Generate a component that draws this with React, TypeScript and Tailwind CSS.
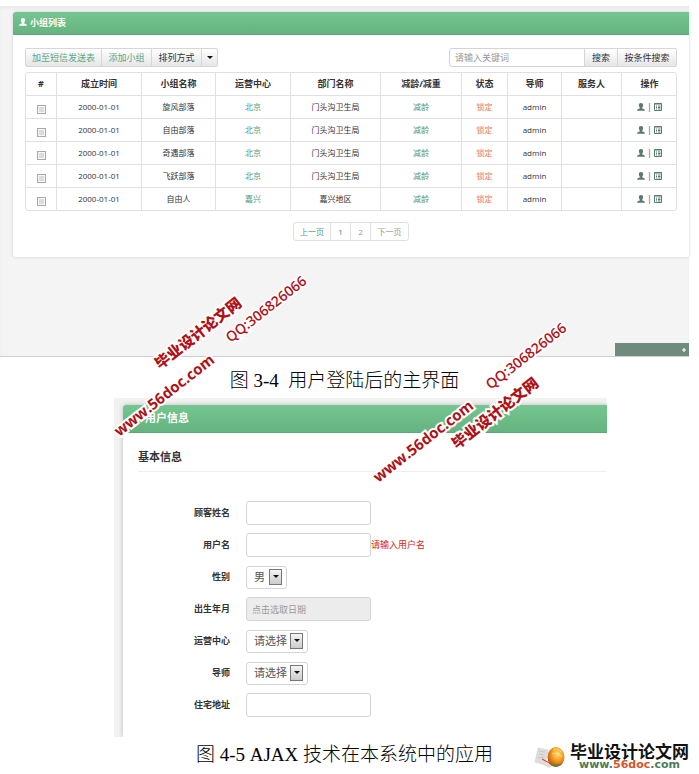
import type { ReactNode } from "react";
import clsx from "clsx";

const groups = [
  { date: "2000-01-01", name: "旋风部落", center: "北京", dept: "门头沟卫生局" },
  { date: "2000-01-01", name: "自由部落", center: "北京", dept: "门头沟卫生局" },
  { date: "2000-01-01", name: "奇遇部落", center: "北京", dept: "门头沟卫生局" },
  { date: "2000-01-01", name: "飞跃部落", center: "北京", dept: "门头沟卫生局" },
  { date: "2000-01-01", name: "自由人", center: "嘉兴", dept: "嘉兴地区" },
];

const columns = [
  { label: "#", width: "w-[30px]" },
  { label: "成立时间", width: "w-[85px]" },
  { label: "小组名称", width: "w-[74px]" },
  { label: "运营中心", width: "w-[75px]" },
  { label: "部门名称", width: "w-[90px]" },
  { label: "减龄/减重", width: "w-[81px]" },
  { label: "状态", width: "w-[46px]" },
  { label: "导师", width: "w-[54px]" },
  { label: "服务人", width: "w-[60px]" },
  { label: "操作", width: "w-[56px]" },
];

const sans = "font-['Open_Sans','Noto_Sans_CJK_SC',sans-serif]";
const buttonStyle =
  "flex items-center justify-center border border-[#d6d6d6] bg-linear-to-b from-white to-[#e6e6e6]";
const inputStyle =
  "h-6 w-[125px] rounded-[3px] border border-[#d4d4d4] px-[5px] text-[9px] placeholder:text-[#999]";

function UserIcon({ className }: { className?: string }) {
  return (
    <svg viewBox="0 0 14 14" className={className} fill="currentColor">
      <path d="M7 0C4.600 0 3.200 1.400 3.200 3.700c0 1.900.7 3.300 1.600 4.100v1.700C3 10 .3 10.500 0 13.500h14c-.3-3-3-3.500-4.800-4V7.800c.9-.8 1.600-2.200 1.600-4.100C10.800 1.400 9.400 0 7 0z" />
    </svg>
  );
}

function ListIcon() {
  return (
    <svg viewBox="0 0 8 8" className="size-2" fill="none" stroke="currentColor">
      <path d="M0.500 0.500h7v7h-7z" />
      <path d="M0.500 1h7" />
      <path d="M2 3h1M2 4.500h1M2 6h1M4 3h2.500M4 4.500h2.500M4 6h2.500" />
    </svg>
  );
}

function Caret() {
  return (
    <svg viewBox="0 0 6 3" className="h-[3px] w-[6px]">
      <path d="M0 0h6L3 3z" fill="#111" />
    </svg>
  );
}

function GroupTable() {
  return (
    <div className="mt-[5px] overflow-hidden rounded-[3px] border border-[#e0e0e0]">
      <table className="w-full table-fixed border-separate border-spacing-0 text-center text-[8px] leading-[10px] text-[#333]">
        <thead>
          <tr>
            {columns.map((col) => (
              <th
                key={col.label}
                scope="col"
                className={clsx(
                  "h-[22px] border-l border-[#e0e0e0] p-0 text-[9px] font-bold first:border-l-0",
                  col.width
                )}
              >
                {col.label}
              </th>
            ))}
          </tr>
        </thead>
        <tbody className="[&_td]:h-[23px] [&_td]:border-t [&_td]:border-l [&_td]:border-[#e0e0e0] [&_td]:p-0 [&_td:first-child]:border-l-0">
          {groups.map((group) => (
            <tr key={group.name}>
              <td>
                <input
                  type="checkbox"
                  aria-label={group.name}
                  className="mx-auto mt-1 block size-[9px] appearance-none border border-[#aaa] bg-[#dcdcdc] outline-1 -outline-offset-2 outline-[#f6f6f6] checked:bg-[#5aa37c]"
                />
              </td>
              <td>{group.date}</td>
              <td>{group.name}</td>
              <td>
                <a href="#" className="text-[#4f9a7b]">
                  {group.center}
                </a>
              </td>
              <td>{group.dept}</td>
              <td>
                <a href="#" className="text-[#4f9a7b]">
                  减龄
                </a>
              </td>
              <td className="text-[#ee7a45]">锁定</td>
              <td>admin</td>
              <td></td>
              <td>
                <div className="flex items-center justify-center gap-[2px] text-[#5b7b6e]">
                  <a href="#" aria-label="成员">
                    <UserIcon className="size-2" />
                  </a>
                  <span className="text-[9px] text-[#555]">|</span>
                  <a href="#" aria-label="详情">
                    <ListIcon />
                  </a>
                </div>
              </td>
            </tr>
          ))}
        </tbody>
      </table>
    </div>
  );
}

function Pagination() {
  return (
    <nav className="mx-auto mt-[11px] flex h-[19px] w-fit divide-x divide-[#e0e0e0] rounded-[3px] border border-[#e0e0e0] text-[8px] text-[#999] [&>a]:flex [&>a]:items-center [&>a]:justify-center">
      <a href="#" className="w-[37px] text-[#4f9a7b]">
        上一页
      </a>
      <a href="#" className="w-5 text-[#4f7a6b]">
        1
      </a>
      <a href="#" className="w-5">
        2
      </a>
      <a href="#" className="w-[37px]">
        下一页
      </a>
    </nav>
  );
}

function GroupPage() {
  return (
    <section
      className={clsx(
        "relative mt-[6px] mr-[10px] border-b border-[#ccc] bg-[#f4f4f4] pt-[6px] pb-[99px] pl-[13px] shadow-[inset_0_3px_3px_#ebebeb]",
        sans
      )}
    >
      <div className="rounded-l-[3px] bg-white pb-4 shadow-[0_0_3px_#ccc]">
        <h2 className="flex h-[23px] items-center gap-[3px] rounded-tl-[3px] border-b border-[#5fa679] bg-linear-to-b from-[#74c690] to-[#66b380] pl-[6px] text-[9px] font-bold text-white">
          <UserIcon className="mb-[3px] size-2" />
          小组列表
        </h2>
        <div className="px-3 pt-[13px]">
          <div className="flex h-[19px] justify-between text-[9px] text-[#333]">
            <div className="flex -space-x-px">
              <button className={clsx(buttonStyle, "w-[77px] rounded-l-[2px] text-[#5aa585]")}>
                加至短信发送表
              </button>
              <button className={clsx(buttonStyle, "w-[51px] text-[#5aa585]")}>
                添加小组
              </button>
              <button className={clsx(buttonStyle, "w-[51px]")}>排列方式</button>
              <button
                aria-label="更多排列方式"
                className={clsx(buttonStyle, "w-[17px] rounded-r-[2px]")}
              >
                <Caret />
              </button>
            </div>
            <div className="flex -space-x-px">
              <input
                type="text"
                aria-label="关键词"
                placeholder="请输入关键词"
                className="w-[136px] rounded-l-[3px] border border-[#d4d4d4] bg-white px-[5px] placeholder:text-[#999]"
              />
              <button className={clsx(buttonStyle, "w-[34px]")}>搜索</button>
              <button className={clsx(buttonStyle, "w-[60px] rounded-r-[2px]")}>
                按条件搜索
              </button>
            </div>
          </div>
          <GroupTable />
          <Pagination />
        </div>
      </div>
      <button
        aria-label="展开"
        className="absolute right-0 bottom-0 flex h-[13px] w-[74px] items-center justify-end bg-[#6f8b7c] pr-[3px] text-white"
      >
        <svg viewBox="0 0 4 4" className="size-1">
          <path d="M2 0v4M0 2h4" stroke="currentColor" strokeWidth="1.200" />
        </svg>
      </button>
    </section>
  );
}

type FieldProps = { id: string; label: string; children: ReactNode };

function Field({ id, label, children }: FieldProps) {
  return (
    <div className="flex h-8 items-center">
      <label htmlFor={id} className="mr-4 w-[92px] text-right text-[9px] font-bold">
        {label}
      </label>
      {children}
    </div>
  );
}

type SelectProps = { id: string; value: string; className: string };

function SelectBox({ id, value, className }: SelectProps) {
  return (
    <div className="relative">
      <select
        id={id}
        className={clsx(
          "block h-[23px] appearance-none rounded-[3px] border border-[#d4d4d4] bg-white pl-[7px] text-[11px] text-[#555]",
          className
        )}
      >
        <option>{value}</option>
      </select>
      <span className="pointer-events-none absolute top-[3px] right-[5px] flex h-4 w-[13px] items-center justify-center border border-[#777] bg-linear-to-b from-[#f4f4f4] to-[#ccc]">
        <Caret />
      </span>
    </div>
  );
}

function UserForm() {
  return (
    <section
      className={clsx(
        "mr-[92px] ml-[114px] overflow-hidden bg-[#f1f1f1] pt-[7px] pl-[9px] text-[#333]",
        sans
      )}
    >
      <div className="rounded-tl-[3px] bg-white pb-4 shadow-[0_0_4px_#bbb]">
        <h2 className="flex h-7 items-center rounded-tl-[3px] border-b border-[#5fa679] bg-linear-to-b from-[#74c690] to-[#66b380] pl-[22px] text-[11px] font-bold text-white">
          用户信息
        </h2>
        <form className="pl-[15px]">
          <h3 className="mb-[25px] border-b border-[#eee] pt-4 pb-[6px] text-[11px] leading-4 font-bold">
            基本信息
          </h3>
          <Field id="customer" label="顾客姓名">
            <input id="customer" type="text" className={inputStyle} />
          </Field>
          <Field id="username" label="用户名">
            <input id="username" type="text" className={inputStyle} />
            <span className="text-[9px] text-[#e02020]">请输入用户名</span>
          </Field>
          <Field id="gender" label="性别">
            <SelectBox id="gender" value="男" className="w-[41px]" />
          </Field>
          <Field id="birthday" label="出生年月">
            <input
              id="birthday"
              type="text"
              readOnly
              placeholder="点击选取日期"
              className={clsx(inputStyle, "bg-[#ececec]")}
            />
          </Field>
          <Field id="center" label="运营中心">
            <SelectBox id="center" value="请选择" className="w-[62px]" />
          </Field>
          <Field id="tutor" label="导师">
            <SelectBox id="tutor" value="请选择" className="w-[62px]" />
          </Field>
          <Field id="address" label="住宅地址">
            <input id="address" type="text" className={inputStyle} />
          </Field>
        </form>
      </div>
    </section>
  );
}

function Caption({ children, className }: { children: ReactNode; className?: string }) {
  return (
    <p
      className={clsx(
        "font-['Liberation_Serif','Noto_Sans_CJK_SC',serif] text-[19px] font-light whitespace-pre text-black",
        className
      )}
    >
      {children}
    </p>
  );
}

function Stamp({ children, className }: { children: ReactNode; className: string }) {
  return (
    <span
      className={clsx(
        "pointer-events-none absolute -translate-1/2 -rotate-38 leading-none whitespace-nowrap text-[#b01015] [-webkit-text-stroke:4px_white] [paint-order:stroke_fill]",
        sans,
        className
      )}
    >
      {children}
    </span>
  );
}

function SiteLogo() {
  return (
    <div className="absolute top-[743px] right-[10px] flex items-center gap-1">
      <svg viewBox="0 0 32 26" className="h-[26px] w-8">
        <defs>
          <radialGradient id="ball" cx="0.6" cy="0.35" r="0.7">
            <stop offset="0" stopColor="#ffe070" />
            <stop offset="0.5" stopColor="#f29a22" />
            <stop offset="1" stopColor="#b84a10" />
          </radialGradient>
        </defs>
        <path d="M4 4l10 2-3 15-10-3z" fill="#ddd" stroke="#ccc" strokeWidth="0.5" />
        <path d="M5 7l6 1M5 10l5 1M4 13l6 1" stroke="#bbb" strokeWidth="0.7" />
        <path d="M10 17l8 5-3 2-7-4z" fill="#e8d8d0" />
        <ellipse cx="22" cy="13" rx="8.500" ry="10" fill="url(#ball)" />
        <path d="M8 15l9 5" stroke="#d03020" strokeWidth="1" />
        <path d="M15 19c3 5 10 5 14 0-3 2-10 2-14 0z" fill="#5f7e3a" />
        <path d="M19 6c3-2 7-1 8 2M18 10c4-2 8 0 10 3" stroke="#ffe9a0" strokeWidth="0.7" fill="none" />
      </svg>
      <div className="flex flex-col items-center">
        <span className="font-['Noto_Sans_CJK_SC',sans-serif] text-[17px] leading-4 font-bold text-[#111]">
          毕业设计论文网
        </span>
        <a
          href="#"
          className="font-['DejaVu_Sans',sans-serif] text-[11px] leading-3 font-bold text-[#4d7c57]"
        >
          www.<span className="text-[#d8542a]">56doc</span>.com
        </a>
      </div>
    </div>
  );
}

export default function App() {
  return (
    <main className="relative flow-root bg-white pb-2">
      <GroupPage />
      <Caption className="mr-[10px] pt-[9px] pb-[3px] text-center leading-[29px]">
        图 3-4  用户登陆后的主界面
      </Caption>
      <UserForm />
      <Caption className="mr-[10px] pt-[3px] text-center leading-[29px]">
        图 4-5 AJAX 技术在本系统中的应用
      </Caption>
      <Stamp className="top-[333px] left-[198px] text-[15px] font-black">毕业设计论文网</Stamp>
      <Stamp className="top-[395px] left-[164px] text-[15px] font-bold">www.56doc.com</Stamp>
      <Stamp className="top-[309px] left-[266px] text-[14px] font-semibold">QQ:306826066</Stamp>
      <Stamp className="top-[413px] left-[495px] text-[15px] font-black">毕业设计论文网</Stamp>
      <Stamp className="top-[441px] left-[423px] text-[15px] font-bold">www.56doc.com</Stamp>
      <Stamp className="top-[356px] left-[526px] text-[14px] font-semibold">QQ:306826066</Stamp>
      <SiteLogo />
    </main>
  );
}
